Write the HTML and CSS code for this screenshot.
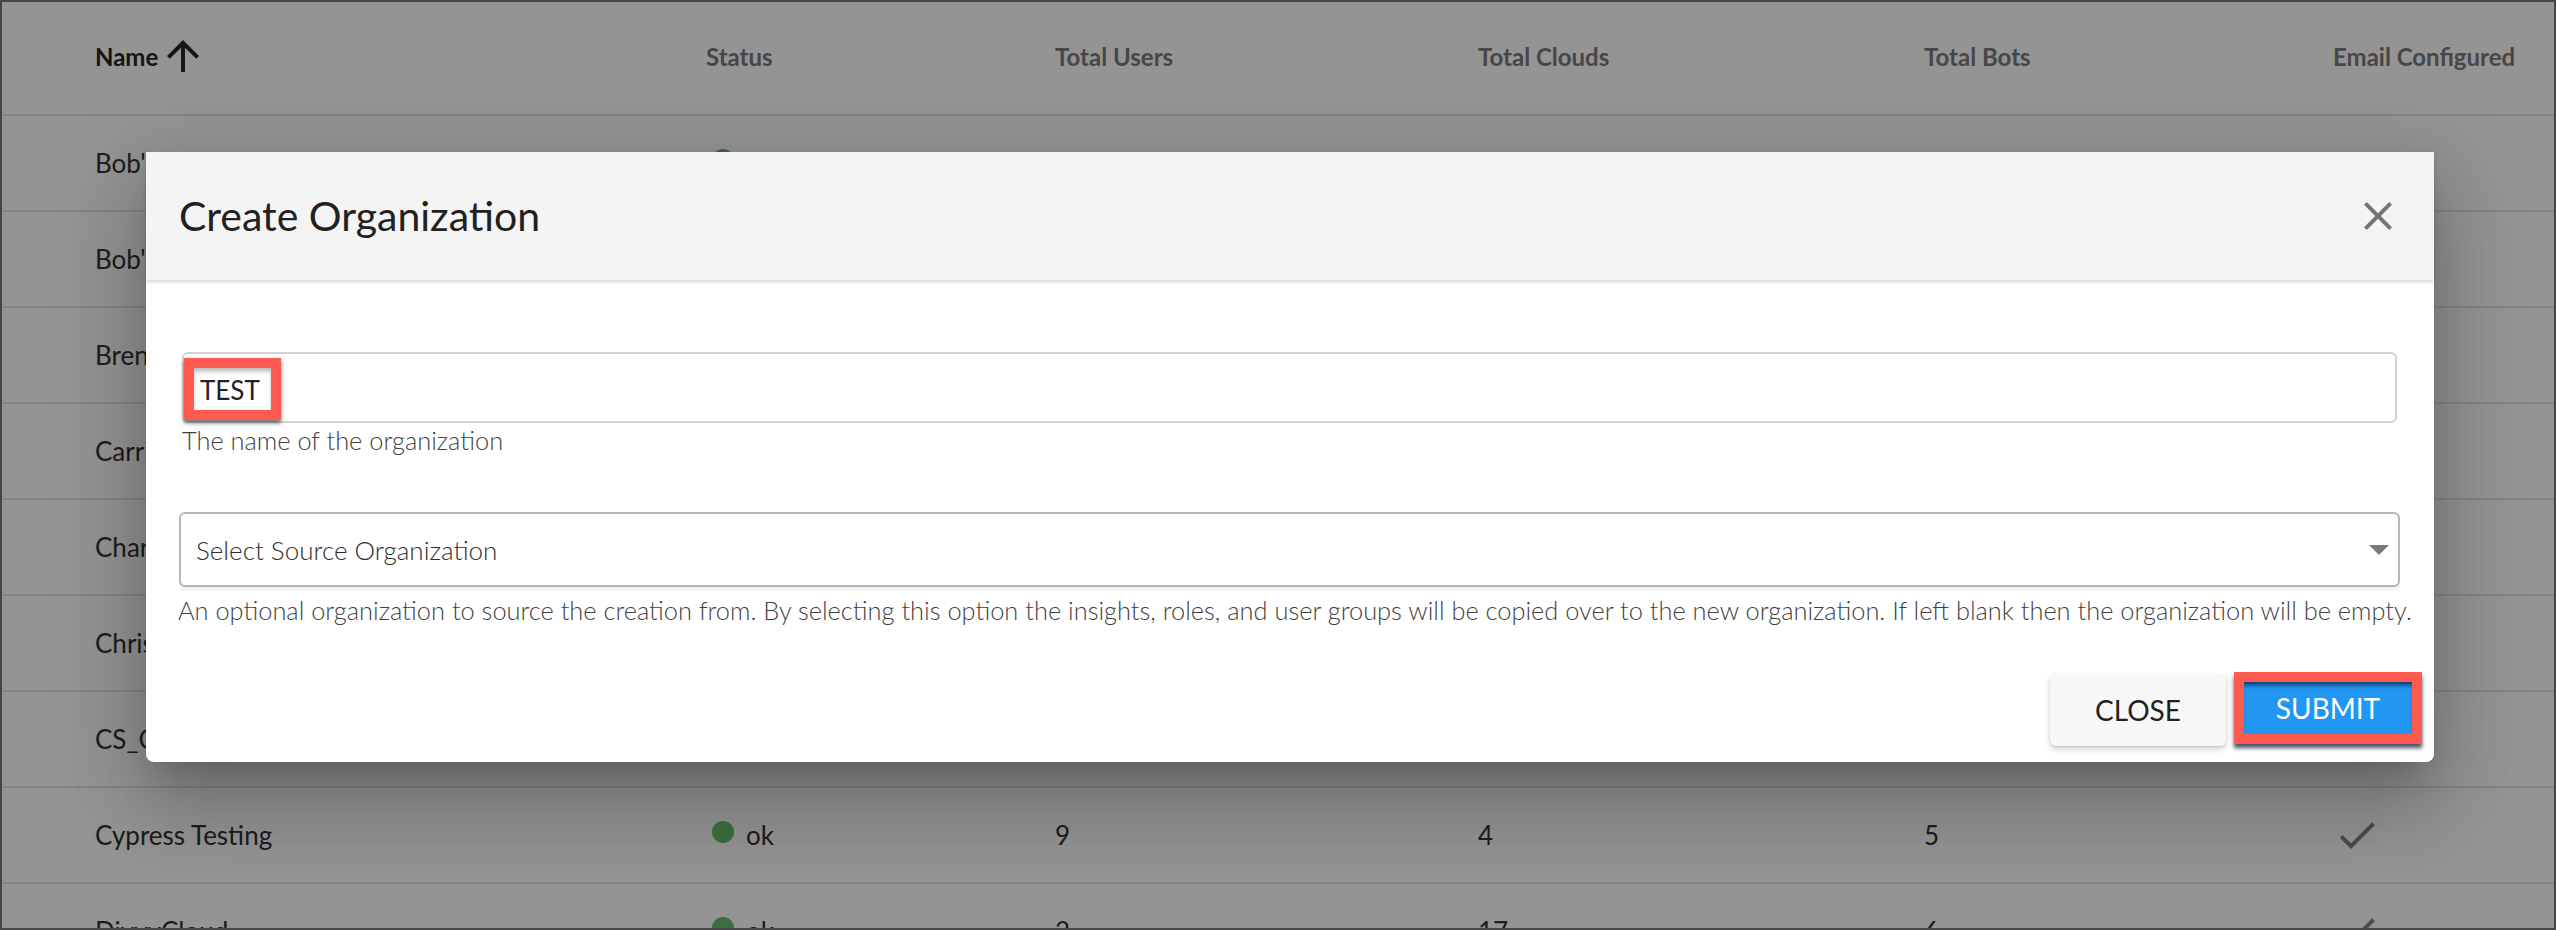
FILE: index.html
```html
<!DOCTYPE html>
<html lang="en">
<head>
<meta charset="utf-8">
<title>Organizations</title>
<link rel="stylesheet" href="styles.css">
</head>
<body>
<div class="screen">
  <div class="table">
    <div class="row head">
      <div class="cell sorted">Name <svg class="sort-icon" viewBox="0 0 24 24"><path d="M4 12l1.41 1.41L11 7.83V20h2V7.83l5.58 5.59L20 12l-8-8-8 8z"/></svg></div>
      <div class="cell">Status</div>
      <div class="cell">Total Users</div>
      <div class="cell">Total Clouds</div>
      <div class="cell">Total Bots</div>
      <div class="cell">Email Configured</div>
    </div>
    <div class="row">
      <div class="cell">Bob's Cloud</div>
      <div class="cell"><span class="dot"></span>ok</div>
      <div class="cell">3</div><div class="cell">2</div><div class="cell">1</div>
      <div class="cell"></div>
    </div>
    <div class="row">
      <div class="cell">Bob's Test Org</div>
      <div class="cell"><span class="dot"></span>ok</div>
      <div class="cell">2</div><div class="cell">1</div><div class="cell">1</div>
      <div class="cell"><svg class="check" viewBox="0 0 24 24"><path d="M9 16.17L4.83 12l-1.42 1.41L9 19 21 7l-1.41-1.41z"/></svg></div>
    </div>
    <div class="row">
      <div class="cell">Brenda Org</div>
      <div class="cell"><span class="dot"></span>ok</div>
      <div class="cell">4</div><div class="cell">3</div><div class="cell">2</div>
      <div class="cell"><svg class="check" viewBox="0 0 24 24"><path d="M9 16.17L4.83 12l-1.42 1.41L9 19 21 7l-1.41-1.41z"/></svg></div>
    </div>
    <div class="row">
      <div class="cell">Carrier Corp</div>
      <div class="cell"><span class="dot"></span>ok</div>
      <div class="cell">6</div><div class="cell">5</div><div class="cell">3</div>
      <div class="cell"><svg class="check" viewBox="0 0 24 24"><path d="M9 16.17L4.83 12l-1.42 1.41L9 19 21 7l-1.41-1.41z"/></svg></div>
    </div>
    <div class="row">
      <div class="cell">Charlie Co</div>
      <div class="cell"><span class="dot"></span>ok</div>
      <div class="cell">1</div><div class="cell">1</div><div class="cell">0</div>
      <div class="cell"><svg class="check" viewBox="0 0 24 24"><path d="M9 16.17L4.83 12l-1.42 1.41L9 19 21 7l-1.41-1.41z"/></svg></div>
    </div>
    <div class="row">
      <div class="cell">Chris Test</div>
      <div class="cell"><span class="dot"></span>ok</div>
      <div class="cell">2</div><div class="cell">2</div><div class="cell">1</div>
      <div class="cell"><svg class="check" viewBox="0 0 24 24"><path d="M9 16.17L4.83 12l-1.42 1.41L9 19 21 7l-1.41-1.41z"/></svg></div>
    </div>
    <div class="row">
      <div class="cell">CS_Cloud</div>
      <div class="cell"><span class="dot"></span>ok</div>
      <div class="cell">5</div><div class="cell">8</div><div class="cell">4</div>
      <div class="cell"><svg class="check" viewBox="0 0 24 24"><path d="M9 16.17L4.83 12l-1.42 1.41L9 19 21 7l-1.41-1.41z"/></svg></div>
    </div>
    <div class="row">
      <div class="cell">Cypress Testing</div>
      <div class="cell"><span class="dot"></span>ok</div>
      <div class="cell">9</div><div class="cell">4</div><div class="cell">5</div>
      <div class="cell"><svg class="check" viewBox="0 0 24 24"><path d="M9 16.17L4.83 12l-1.42 1.41L9 19 21 7l-1.41-1.41z"/></svg></div>
    </div>
    <div class="row">
      <div class="cell">DivvyCloud</div>
      <div class="cell"><span class="dot"></span>ok</div>
      <div class="cell">2</div><div class="cell">17</div><div class="cell">6</div>
      <div class="cell"><svg class="check" viewBox="0 0 24 24"><path d="M9 16.17L4.83 12l-1.42 1.41L9 19 21 7l-1.41-1.41z"/></svg></div>
    </div>
  </div>

  <div class="backdrop"></div>

  <div class="dialog">
    <div class="dialog-head">
      <h2 class="dialog-title">Create Organization</h2>
      <button class="icon-btn" aria-label="Close"><svg viewBox="0 0 24 24"><path d="M19 6.41L17.59 5 12 10.59 6.41 5 5 6.41 10.59 12 5 17.59 6.41 19 12 13.41 17.59 19 19 17.59 13.41 12z"/></svg></button>
    </div>
    <div class="dialog-body">
      <div class="field">
        <span class="annot annot-text">TEST</span>
      </div>
      <p class="help help-name">The name of the organization</p>
      <div class="select">
        <span class="placeholder">Select Source Organization</span>
        <svg class="caret" viewBox="7 10 10 5"><path d="M7 10l5 5 5-5z"/></svg>
      </div>
      <p class="help help-source">An optional organization to source the creation from. By selecting this option the insights, roles, and user groups will be copied over to the new organization. If left blank then the organization will be empty.</p>
      <div class="actions">
        <button class="btn btn-close">CLOSE</button>
        <span class="annot annot-btn"><button class="btn btn-submit">SUBMIT</button></span>
      </div>
    </div>
  </div>
</div>
</body>
</html>
```

FILE: styles.css
```css
html, body {
  margin: 0;
  padding: 0;
  background: #464646;
}

.screen {
  position: relative;
  width: 2556px;
  height: 930px;
  box-sizing: border-box;
  border: 2px solid #464646;
  background: #ffffff;
  overflow: hidden;
  font-family: "Lato", "Liberation Sans", sans-serif;
}

/* ---------- table ---------- */
.row {
  display: grid;
  grid-template-columns: 611px 349px 423px 446px 409px 1fr;
  align-items: center;
  padding-left: 93px;
  height: 96px;
  box-sizing: border-box;
  border-bottom: 2px solid #e6e6e6;
  font-size: 26px;
  color: #333333;
}

.row.head {
  height: 114px;
  padding-bottom: 4px;
  font-size: 24px;
  font-weight: 700;
  color: #7a7a7a;
}

.cell {
  display: flex;
  align-items: center;
  white-space: nowrap;
}

.cell.sorted {
  color: #262626;
}

.sort-icon {
  width: 48px;
  height: 48px;
  margin-left: 1px;
  fill: #262626;
}

.dot {
  width: 22px;
  height: 22px;
  border-radius: 50%;
  background: #6abf69;
  margin: 0 12px 6px 6px;
}

.check {
  width: 48px;
  height: 48px;
  fill: #858585;
}

.backdrop {
  position: absolute;
  inset: 0;
  background: rgba(0, 0, 0, 0.42);
}

/* ---------- dialog ---------- */
.dialog {
  position: absolute;
  left: 144px;
  top: 150px;
  width: 2288px;
  height: 610px;
  background: #ffffff;
  border-radius: 0 0 8px 8px;
  box-shadow: 0 22px 30px -14px rgba(0, 0, 0, 0.2),
              0 48px 76px 6px rgba(0, 0, 0, 0.14),
              0 18px 92px 16px rgba(0, 0, 0, 0.12);
}

.dialog-head {
  position: relative;
  z-index: 1;
  height: 128px;
  box-sizing: border-box;
  display: flex;
  align-items: center;
  justify-content: space-between;
  padding: 0 32px 0 33px;
  background: #f4f4f4;
  box-shadow: 0 2px 4px rgba(0, 0, 0, 0.16);
}

.dialog-title {
  margin: 0;
  font-size: 41px;
  font-weight: 400;
  color: #212121;
  line-height: 48px;
}

.icon-btn {
  width: 48px;
  height: 48px;
  padding: 0;
  border: 0;
  background: none;
  display: flex;
}

.icon-btn svg {
  width: 48px;
  height: 48px;
  fill: #757575;
}

.dialog-body {
  padding: 72px 34px 0 33px;
}

.field {
  margin: 0 3px;
  height: 71px;
  box-sizing: border-box;
  border: 2px solid #d2d2d2;
  border-radius: 6px;
  display: flex;
  align-items: center;
}

.annot {
  box-sizing: border-box;
  border: 10px solid #fe5a4f;
  box-shadow: 0 3px 4px rgba(0, 0, 0, 0.55);
}

.annot-text {
  width: 97px;
  height: 62px;
  margin-top: 3px;
  display: flex;
  align-items: center;
  padding-left: 6px;
  padding-top: 2px;
  background: #ffffff;
  font-size: 26px;
  color: #222222;
  box-shadow: 0 3px 4px rgba(0, 0, 0, 0.55), inset 0 4px 5px -1px rgba(0, 0, 0, 0.3);
}

.help {
  margin: 0;
  font-size: 25.4px;
  font-weight: 300;
  line-height: 31px;
  color: #3f3f3f;
  white-space: nowrap;
}

.help-name {
  margin: 2px 0 0 3px;
}

.select {
  margin-top: 56px;
  height: 75px;
  box-sizing: border-box;
  border: 2px solid #b6b6b6;
  border-radius: 6px;
  display: flex;
  align-items: center;
  justify-content: space-between;
  padding: 0 9px 0 15px;
  box-shadow: 0 4px 0 #f3f3f3;
}

.placeholder {
  font-size: 26px;
  font-weight: 300;
  color: #2e2e2e;
}

.caret {
  width: 20px;
  height: 10px;
  fill: #7a7a7a;
}

.help-source {
  margin-top: 8px;
  margin-left: -1px;
}

.actions {
  margin: 48px -22px 0 0;
  display: flex;
  justify-content: flex-end;
  align-items: center;
  gap: 8px;
}

.btn {
  font-family: "Lato", "Liberation Sans", sans-serif;
  font-size: 28px;
  font-weight: 400;
  border: 0;
  padding: 0;
  cursor: pointer;
}

.btn-close {
  width: 176px;
  height: 72px;
  border-radius: 6px;
  background: #f7f7f7;
  color: #212121;
  box-shadow: 0 3px 6px rgba(0, 0, 0, 0.18), 0 1px 2px rgba(0, 0, 0, 0.1);
}

.annot-btn {
  width: 188px;
  height: 72px;
  margin-top: -4px;
  display: flex;
  box-shadow: 0 4px 4px rgba(10, 25, 50, 0.75);
}

.btn-submit {
  flex: 1;
  background: #2196f3;
  color: #ffffff;
  box-shadow: inset 0 5px 4px -2px rgba(0, 10, 40, 0.65);
}
```
